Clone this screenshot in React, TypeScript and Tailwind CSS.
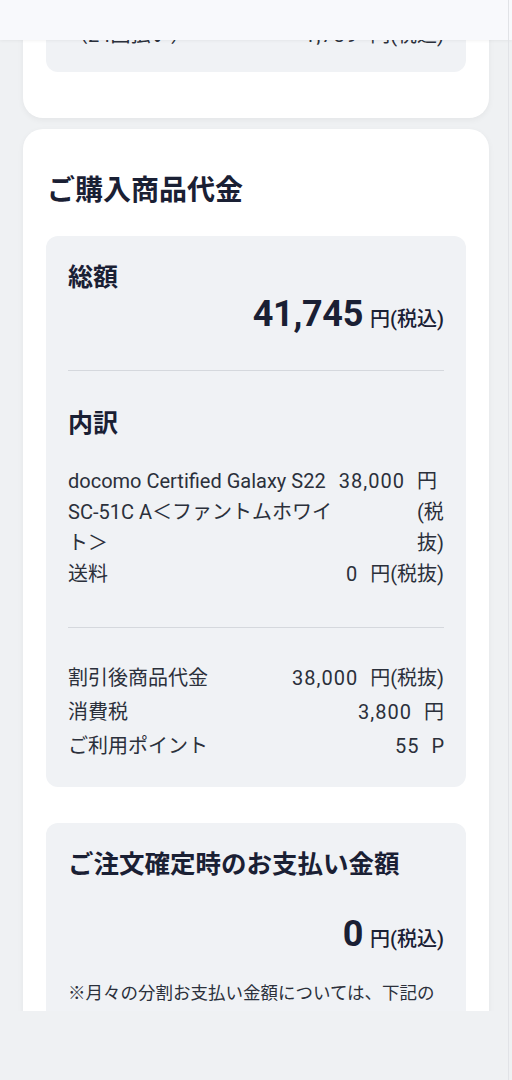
import React from 'react';

type RowProps = {
  label: React.ReactNode;
  num: string;
  unit: string;
  unitClass?: string;
};

// 明細の1行
const Row: React.FC<RowProps> = ({ label, num, unit, unitClass = '' }) => (
  <div className="flex justify-between gap-1">
    <div className="flex-1 min-w-0">{label}</div>
    <div className="flex gap-3 shrink-0">
      <span className="whitespace-nowrap tracking-[1px]">{num}</span>
      <span className={unitClass}>{unit}</span>
    </div>
  </div>
);

const Amount: React.FC<{ value: string }> = ({ value }) => (
  <div className="flex justify-end items-baseline text-[#1a2034]">
    <span className="text-[36px] leading-[36px] font-bold tracking-[-0.3px]">{value}</span>
    <span className="ml-[7px] text-[20px] font-medium">円(税込)</span>
  </div>
);

export default function App() {
  return (
    <div className="relative w-full h-[1080px] bg-[#eff1f3] overflow-hidden font-['Roboto','Noto_Sans_CJK_JP',sans-serif] text-[#2b303b]">
      {/* scrollbar gutter */}
      <div className="absolute top-0 bottom-0 right-[3px] w-px bg-[#e1e3e7] z-20" />

      <div className="relative h-[1011px] overflow-hidden">
        {/* header */}
        <div className="absolute top-0 left-0 right-0 h-[40px] bg-[#f8f9fc] shadow-[0_1px_3px_rgba(0,0,0,0.05)] z-10" />

        <div className="px-[23px] -mt-[90px]">
          {/* 前のカード（上部は隠れている） */}
          <div className="bg-white rounded-[20px] px-[23px] pt-[23px] pb-[46px] shadow-[0_2px_6px_rgba(0,0,0,0.05)]">
            <div className="bg-[#f0f2f5] rounded-[12px] px-[22px] pt-[20px] pb-[20px] text-[20px] leading-[33px]">
              <Row label="機種代金" num="38,000" unit="円" />
              <Row label="分割支払金" num="1,583" unit="円/月" />
              <Row label="（24回払い）" num="1,739" unit="円(税込)" />
            </div>
          </div>

          {/* ご購入商品代金 */}
          <div className="mt-[11px] bg-white rounded-[20px] px-[23px] pt-[41px] shadow-[0_2px_6px_rgba(0,0,0,0.05)]">
            <h2 className="text-[28px] leading-[42px] font-bold text-[#1a2034] pl-px">ご購入商品代金</h2>

            <div className="mt-[24px] bg-[#f0f2f5] rounded-[12px] px-[22px] pt-[24px] pb-[24px]">
              <h3 className="text-[25px] leading-[36px] font-bold text-[#1a2034]">総額</h3>
              <Amount value="41,745" />

              <div className="mt-[36px] h-px bg-[#d5d8dd]" />

              <h3 className="mt-[35px] text-[25px] leading-[36px] font-bold text-[#1a2034]">内訳</h3>

              <div className="mt-[24px] text-[20px] leading-[31px]">
                <Row
                  label="docomo Certified Galaxy S22 SC-51C A＜ファントムホワイト＞"
                  num="38,000"
                  unit="円(税抜)"
                  unitClass="w-[27px]"
                />
                <Row label="送料" num="0" unit="円(税抜)" />
              </div>

              <div className="mt-[37px] h-px bg-[#d5d8dd]" />

              <div className="mt-[33px] text-[20px] leading-[34px]">
                <Row label="割引後商品代金" num="38,000" unit="円(税抜)" />
                <Row label="消費税" num="3,800" unit="円" />
                <Row label="ご利用ポイント" num="55" unit="P" />
              </div>
            </div>

            {/* ご注文確定時のお支払い金額 */}
            <div className="mt-[36px] bg-[#f0f2f5] rounded-[12px] px-[22px] pt-[22px] pb-[24px]">
              <h3 className="text-[25.5px] leading-[38px] font-bold text-[#1a2034]">ご注文確定時のお支払い金額</h3>
              <div className="mt-[33px]">
                <Amount value="0" />
              </div>
              <p className="mt-[26px] text-[17.5px] leading-[27px] pl-[1em] -indent-[1em]">
                ※月々の分割お支払い金額については、下記の「お支払い内容のご確認」にてご確認ください。
              </p>
            </div>
          </div>
        </div>
      </div>
    </div>
  );
}
